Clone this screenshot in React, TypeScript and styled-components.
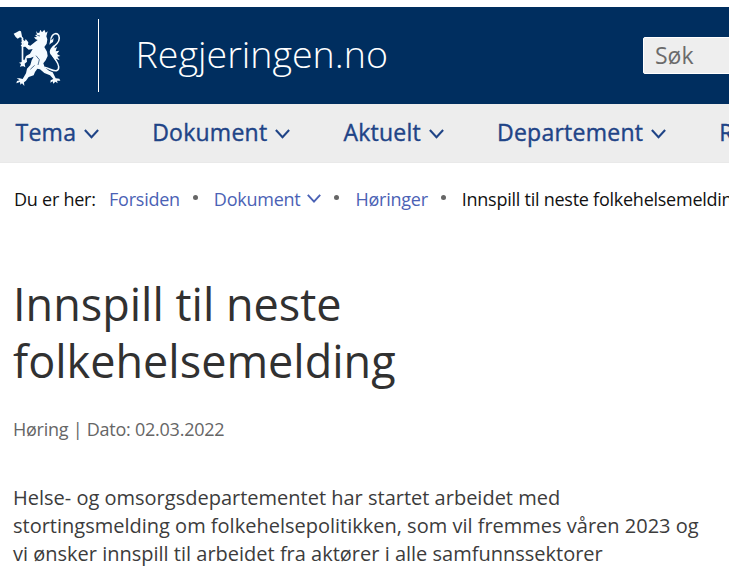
import styled, {createGlobalStyle} from 'styled-components';

type TextProps = {
  $color?: string;
};

const GlobalStyle = createGlobalStyle`
  * {
    box-sizing: border-box;
  }
  body {
    margin: 0;
    background-color: #fff;
    font-family: 'Open Sans', 'Noto Sans', sans-serif;
    overflow: hidden;
  }
`;

const Page = styled.div`
  width: 100%;
  height: 100vh;
  padding-top: 7px;
  overflow: hidden;
`;

const Header = styled.header`
  display: flex;
  align-items: center;
  height: 97px;
  padding-left: 13px;
  background-color: #002e5f;
`;

const LogoLink = styled.a`
  display: flex;
  flex: none;
  align-items: center;
  height: 73px;
  width: 86px;
  border-right: 1px solid #fff;
`;

const LionWrap = styled.span`
  display: flex;
  margin-left: -5px;
`;

const SiteName = styled.div`
  flex: none;
  width: 251px;
  margin: 0 0 3px 36.5px;
  font-size: 37.6px;
  font-weight: 300;
  line-height: 52px;
  white-space: nowrap;
  color: #fff;
`;

const SearchInput = styled.input`
  flex: none;
  width: 320px;
  height: 37px;
  margin-left: 256.5px;
  padding: 0 11px 2px;
  border: 1px solid #fff;
  border-radius: 2px;
  background-color: #eee;
  font-family: inherit;
  font-size: 23px;
  &::placeholder {
    color: #6b6b6b;
    opacity: 1;
  }
`;

const Nav = styled.nav`
  display: flex;
  gap: 53px;
  height: 59px;
  padding: 0 0 3px 15.5px;
  background-color: #ededed;
  border-bottom: 1px solid #e9e9e9;
`;

const NavItem = styled.a`
  display: flex;
  flex: none;
  align-items: center;
  gap: 8px;
  font-size: 23px;
  letter-spacing: 0.25px;
  color: #1f4487;
  -webkit-text-stroke: 0.4px #1f4487;
  svg {
    margin-top: 5px;
  }
`;

const Breadcrumb = styled.div`
  display: flex;
  align-items: center;
  height: 24px;
  margin-top: 24px;
  padding-left: 14px;
  font-size: 18px;
  letter-spacing: -0.25px;
  white-space: nowrap;
`;

const Links = styled.div`
  display: flex;
  align-items: center;
  margin-left: 9px;
`;

const Crumb = styled.span<TextProps>`
  display: flex;
  flex: none;
  align-items: center;
  gap: 7px;
  color: ${props => props.$color || '#111'};
`;

const Dot = styled.span`
  flex: none;
  width: 5px;
  height: 5px;
  margin: 0 16px 3px 13px;
  border-radius: 50%;
  background-color: #666;
`;

const Article = styled.main`
  padding: 64px 0 0 13px;
`;

const Title = styled.h1`
  width: 420px;
  margin: 0;
  font-size: 45px;
  font-weight: 400;
  line-height: 57px;
  color: #313131;
`;

const Meta = styled.div`
  margin-top: 27px;
  font-size: 18px;
  line-height: 26px;
  letter-spacing: -0.25px;
  color: #666;
`;

const Lead = styled.p`
  margin: 42px 0 0;
  font-size: 20px;
  line-height: 28px;
  color: #3c3c3c;
  white-space: nowrap;
`;

const Chevron = ({size = 15}: {size?: number}) => (
  <svg width={size} height={size * 0.66} viewBox="0 0 15 10" fill="none">
    <path d="M0.8 1 7.5 8.2 14.2 1" stroke="currentColor" strokeWidth="2.1" />
  </svg>
);

const Lion = () => (
  <svg width="60" height="66" viewBox="0 0 180 198" fill="#f4fbff">
    {/* axe */}
    <path d="M17 32 26 28 34 23 39 25 43 45 36 43 29 47 23 42Z" />
    <path d="M40 39 46 45V130H41V48Z" />
    {/* crown, head and body */}
    <path d="M84 24 89 30 94 29 97 20 102 28 109 20 113 29 119 25 115 40 118 49 116 62 109 72 117 86 119 99 113 112 106 121 110 133 123 143 134 148 140 160 143 166 154 167 157 173 147 173 149 181 142 176 136 182 134 175 127 179 128 172 136 168 126 157 109 150 96 139 88 137 81 147 77 157 62 162 54 173 48 178 49 189 42 181 37 185 36 177 25 181 27 174 35 172 26 166 35 166 44 168 54 151 57 137 67 126 71 112 77 101 67 105 56 106 57 116 50 122 52 133 44 128 36 132 39 123 33 119 42 117 42 108 49 112 54 99 66 92 74 78 62 80 52 71 43 72 38 67 47 63 38 57 46 57 40 48 51 54 53 48 61 58 60 65 67 68 80 58 89 51 83 49 78 43 87 42 81 36 87 35Z" />
    {/* tail */}
    <path
      d="M109 133C124 135 133 145 145 143C157 139 152 124 144 112C132 95 124 83 138 70C152 59 157 48 152 37C146 28 133 31 129 47"
      fill="none"
      stroke="#f4fbff"
      strokeWidth="4.5"
    />
    <path d="M139 66C124 77 122 88 130 97L145 116 144 107 155 112 148 101 157 99 147 93 154 83 143 85 147 71 140 76ZM128 44 131 51 137 45 135 57 129 61 124 65Z" />
    {/* mane and flank details */}
    <path d="M88 37 96 39M84 98 94 110 90 126M67 139 80 127" fill="none" stroke="#002e5f" strokeWidth="2" />
  </svg>
);

const navItems = ['Tema', 'Dokument', 'Aktuelt', 'Departement', 'Regjering'];

const linkColor = '#4b62b5';

const App = () => {
  return (
    <Page>
      <GlobalStyle />
      <Header>
        <LogoLink>
          <LionWrap>
            <Lion />
          </LionWrap>
        </LogoLink>
        <SiteName>Regjeringen.no</SiteName>
        <SearchInput type="text" placeholder="Søk" />
      </Header>
      <Nav>
        {navItems.map(item => (
          <NavItem key={item}>
            {item}
            <Chevron />
          </NavItem>
        ))}
      </Nav>
      <Breadcrumb>
        <Crumb>Du er her:&nbsp;</Crumb>
        <Links>
          <Crumb $color={linkColor}>Forsiden</Crumb>
          <Dot />
          <Crumb $color={linkColor}>
            Dokument
            <Chevron size={14} />
          </Crumb>
          <Dot />
          <Crumb $color={linkColor}>Høringer</Crumb>
          <Dot />
          <Crumb>Innspill til neste folkehelsemelding</Crumb>
        </Links>
      </Breadcrumb>
      <Article>
        <Title>Innspill til neste folkehelsemelding</Title>
        <Meta>Høring | Dato: 02.03.2022</Meta>
        <Lead>
          Helse- og omsorgsdepartementet har startet arbeidet med
          <br />
          stortingsmelding om folkehelsepolitikken, som vil fremmes våren 2023 og
          <br />
          vi ønsker innspill til arbeidet fra aktører i alle samfunnssektorer
        </Lead>
      </Article>
    </Page>
  );
};

export default App;
